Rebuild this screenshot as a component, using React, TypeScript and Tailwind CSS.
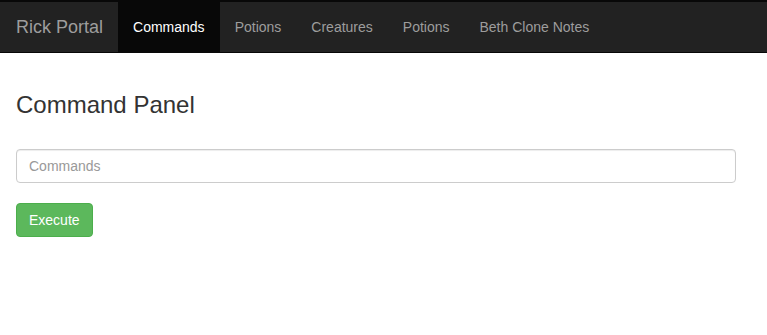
const links = ["Potions", "Creatures", "Potions", "Beth Clone Notes"];

export default function App() {
  return (
    <div className="min-h-[335px] bg-white font-['Liberation_Sans',Arial,sans-serif] text-[14px] text-[#333]">
      <nav className="flex h-[53px] border-t-2 border-b border-[#080808] bg-[#222]">
        <a className="block h-[50px] pl-4 pr-[15px] py-[15px] text-[18px] leading-[20px] text-[#9d9d9d]">
          Rick Portal
        </a>
        <a className="block h-[50px] bg-[#080808] px-[15px] py-[15px] leading-[20px] text-white">Commands</a>
        {links.map((link, i) => (
          <a key={i} className="block h-[50px] px-[15px] py-[15px] leading-[20px] text-[#9d9d9d]">
            {link}
          </a>
        ))}
      </nav>

      <div className="px-4">
        <h3 className="mt-[39px] mb-[31px] text-[24px] leading-[26.4px] font-normal text-[#333]">Command Panel</h3>
        <input
          placeholder="Commands"
          className="block h-[34px] w-[720px] rounded-[4px] border border-[#ccc] px-3 py-[6px] text-[14px] leading-[20px] text-[#555] shadow-[inset_0_1px_1px_rgba(0,0,0,0.075)] placeholder:text-[#999] focus:outline-none"
        />
        <button
          type="button"
          className="mt-5 h-[34px] rounded-[4px] border border-[#4cae4c] bg-[#5cb85c] px-3 py-[6px] text-[14px] leading-[20px] text-white"
        >
          Execute
        </button>
      </div>
    </div>
  );
}
